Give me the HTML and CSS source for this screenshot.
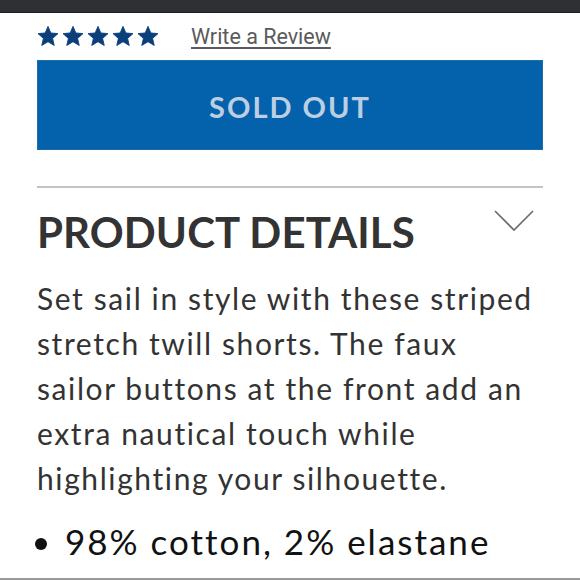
FILE: index.html
```html
<!DOCTYPE html>
<html>
<head>
<meta charset="utf-8">
<link rel="stylesheet" href="styles.css">
</head>
<body>
<div class="topbar"></div>
<div class="page">
  <div class="rating">
    <div class="stars">
      <svg viewBox="0 0 24 24" class="star"><path d="M12 1.5l3.1 7.2 7.8.7-5.9 5.2 1.8 7.7L12 18.2l-6.8 4.1 1.8-7.7L1.1 9.4l7.8-.7z"/></svg>
      <svg viewBox="0 0 24 24" class="star"><path d="M12 1.5l3.1 7.2 7.8.7-5.9 5.2 1.8 7.7L12 18.2l-6.8 4.1 1.8-7.7L1.1 9.4l7.8-.7z"/></svg>
      <svg viewBox="0 0 24 24" class="star"><path d="M12 1.5l3.1 7.2 7.8.7-5.9 5.2 1.8 7.7L12 18.2l-6.8 4.1 1.8-7.7L1.1 9.4l7.8-.7z"/></svg>
      <svg viewBox="0 0 24 24" class="star"><path d="M12 1.5l3.1 7.2 7.8.7-5.9 5.2 1.8 7.7L12 18.2l-6.8 4.1 1.8-7.7L1.1 9.4l7.8-.7z"/></svg>
      <svg viewBox="0 0 24 24" class="star"><path d="M12 1.5l3.1 7.2 7.8.7-5.9 5.2 1.8 7.7L12 18.2l-6.8 4.1 1.8-7.7L1.1 9.4l7.8-.7z"/></svg>
    </div>
    <a class="review" href="#">Write a Review</a>
  </div>
  <div class="sold-out">SOLD OUT</div>
  <div class="divider"></div>
  <div class="details-head">
    <h2 class="title">PRODUCT DETAILS</h2>
    <svg class="chevron" viewBox="0 0 40 22"><path d="M1 1l19 19L39 1" fill="none" stroke="#6a6a6a" stroke-width="1.6"/></svg>
  </div>
  <p class="desc">Set sail in style with these striped<br>stretch twill shorts. The faux<br>sailor buttons at the front add an<br>extra nautical touch while<br>highlighting your silhouette.</p>
  <ul class="bullets">
    <li>98% cotton, 2% elastane</li>
  </ul>
</div>
<div class="bottomline"></div>
</body>
</html>
```
FILE: styles.css
```css
html, body {
  margin: 0;
  padding: 0;
  background: #ffffff;
}
body {
  width: 580px;
  height: 580px;
  overflow: hidden;
  position: relative;
  font-family: "Lato", "Noto Sans", sans-serif;
}
.topbar {
  height: 12px;
  background: #2f3034;
  border-bottom: 1px solid #1e1f22;
}
.page {
  padding: 0 37px;
}
.rating {
  display: flex;
  align-items: center;
  height: 47px;
  gap: 32px;
}
.stars {
  display: flex;
  gap: 3px;
  margin-left: 0;
  margin-top: -2px;
}
.star {
  width: 22px;
  height: 22px;
  fill: #0b3f7b;
  stroke: #0b3f7b;
  stroke-width: 1;
  stroke-linejoin: round;
}
.review {
  font-family: "Roboto", sans-serif;
  font-size: 21.5px;
  color: #5a5a5a;
  text-decoration: underline;
  text-underline-offset: 3px;
  text-decoration-thickness: 2px;
  margin-top: 0;
}
.sold-out {
  height: 90px;
  background: #0461ab;
  color: #bccfe2;
  display: flex;
  align-items: center;
  justify-content: center;
  font-weight: 700;
  font-size: 29px;
  letter-spacing: 2px;
  padding-top: 2px;
  box-sizing: border-box;
  box-shadow: 0 0 0 1px #1d6ea8 inset;
}
.divider {
  margin-top: 36px;
  height: 2px;
  background: #c4c4c4;
}
.details-head {
  display: flex;
  justify-content: space-between;
  align-items: flex-start;
}
.title {
  margin: 19px 0 0 0;
  font-size: 42px;
  font-weight: 700;
  letter-spacing: 0.1px;
  color: #333333;
  line-height: 50px;
}
.chevron {
  width: 40px;
  height: 22px;
  margin-top: 22px;
  margin-right: 9px;
}
.desc {
  margin: 19px 0 0 0;
  font-size: 30px;
  letter-spacing: 1.6px;
  line-height: 45px;
  color: #333333;
}
.bullets {
  margin: 18px 0 0 0;
  padding: 0 0 0 28px;
  font-size: 35px;
  letter-spacing: 2px;
  color: #111111;
  line-height: 45px;
}
.bottomline {
  position: absolute;
  left: 0;
  right: 0;
  bottom: 0;
  height: 2px;
  background: #9a9a9a;
}
```
